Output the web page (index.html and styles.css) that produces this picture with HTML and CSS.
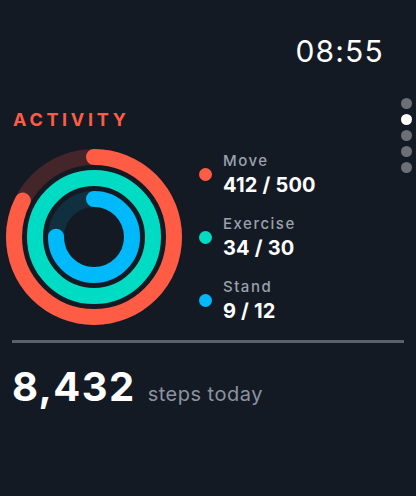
FILE: index.html
```html
<!DOCTYPE html>
<html lang="en">
<head>
<meta charset="utf-8">
<title>Activity</title>
<link rel="stylesheet" href="styles.css">
</head>
<body>
<div class="screen">
  <header class="status">
    <span class="time">08:55</span>
  </header>

  <div class="pager">
    <span class="pager-dot"></span>
    <span class="pager-dot active"></span>
    <span class="pager-dot"></span>
    <span class="pager-dot"></span>
    <span class="pager-dot"></span>
  </div>

  <h1 class="title">ACTIVITY</h1>

  <section class="activity">
    <svg class="rings" width="176" height="176" viewBox="0 0 176 176">
      <g transform="rotate(-90 88 88)">
        <circle class="track track-move" cx="88" cy="88" r="80"/>
        <circle class="arc arc-move" cx="88" cy="88" r="80" stroke-dasharray="414.2 600"/>
        <circle class="arc arc-exercise" cx="88" cy="88" r="59"/>
        <circle class="track track-stand" cx="88" cy="88" r="38"/>
        <circle class="arc arc-stand" cx="88" cy="88" r="38" stroke-dasharray="179.1 400"/>
      </g>
    </svg>

    <ul class="legend">
      <li class="legend-item">
        <span class="legend-dot dot-move"></span>
        <div class="legend-text">
          <span class="legend-label">Move</span>
          <span class="legend-value">412 / 500</span>
        </div>
      </li>
      <li class="legend-item">
        <span class="legend-dot dot-exercise"></span>
        <div class="legend-text">
          <span class="legend-label">Exercise</span>
          <span class="legend-value">34 / 30</span>
        </div>
      </li>
      <li class="legend-item">
        <span class="legend-dot dot-stand"></span>
        <div class="legend-text">
          <span class="legend-label">Stand</span>
          <span class="legend-value">9 / 12</span>
        </div>
      </li>
    </ul>
  </section>

  <hr class="divider">

  <div class="steps">
    <span class="steps-count">8,432</span>
    <span class="steps-label">steps today</span>
  </div>
</div>
</body>
</html>
```

FILE: styles.css
```css
* {
  box-sizing: border-box;
}

html, body {
  margin: 0;
  padding: 0;
  background: #141a24;
}

body {
  width: 416px;
  height: 496px;
  overflow: hidden;
  font-family: Inter, "Noto Sans", sans-serif;
  color: #ffffff;
}

.screen {
  position: relative;
  height: 496px;
  padding: 33px 12px 0 12px;
}

.status {
  display: flex;
  justify-content: flex-end;
  padding-right: 20px;
}

.time {
  font-size: 30px;
  line-height: 36px;
  font-weight: 400;
  letter-spacing: 1.2px;
  color: #ffffff;
}

.pager {
  position: absolute;
  top: 98px;
  right: 4px;
  display: flex;
  flex-direction: column;
  gap: 5px;
}

.pager-dot {
  width: 11px;
  height: 11px;
  border-radius: 50%;
  background: #6c6f76;
}

.pager-dot.active {
  background: #ffffff;
}

.title {
  margin: 40px 0 0 1px;
  font-size: 18px;
  line-height: 22px;
  font-weight: 700;
  letter-spacing: 3.7px;
  color: #ff5c45;
}

.activity {
  display: flex;
  align-items: center;
  margin-top: 18px;
  margin-left: -6px;
}

.rings {
  display: block;
  flex: none;
}

.track,
.arc {
  fill: none;
  stroke-width: 16;
}

.arc {
  stroke-linecap: round;
}

.track-move {
  stroke: #44262a;
}

.arc-move {
  stroke: #ff5c45;
}

.arc-exercise {
  stroke: #00dcc3;
}

.track-stand {
  stroke: #10303f;
}

.arc-stand {
  stroke: #00b9fa;
}

.legend {
  list-style: none;
  margin: 0 0 0 17px;
  padding: 0;
  display: flex;
  flex-direction: column;
  gap: 18px;
}

.legend-item {
  display: flex;
  align-items: center;
  gap: 11px;
}

.legend-dot {
  width: 13px;
  height: 13px;
  border-radius: 50%;
  flex: none;
}

.dot-move { background: #ff5c45; }
.dot-exercise { background: #00dcc3; }
.dot-stand { background: #00b9fa; }

.legend-text {
  display: flex;
  flex-direction: column;
  gap: 3px;
}

.legend-label {
  font-size: 15px;
  line-height: 18px;
  font-weight: 500;
  letter-spacing: 1.5px;
  color: #9ba1ad;
}

.legend-value {
  font-size: 20px;
  line-height: 24px;
  font-weight: 700;
  letter-spacing: 0.2px;
  color: #ffffff;
}

.divider {
  margin: 15px 0 0 0;
  border: 0;
  height: 3px;
  background: #5b616b;
}

.steps {
  display: flex;
  align-items: baseline;
  gap: 12px;
  margin-top: 20px;
}

.steps-count {
  font-size: 40px;
  line-height: 48px;
  font-weight: 700;
  letter-spacing: 1.4px;
  color: #ffffff;
}

.steps-label {
  font-size: 20px;
  line-height: 24px;
  font-weight: 400;
  letter-spacing: 0.5px;
  color: #8b93a0;
}
```
